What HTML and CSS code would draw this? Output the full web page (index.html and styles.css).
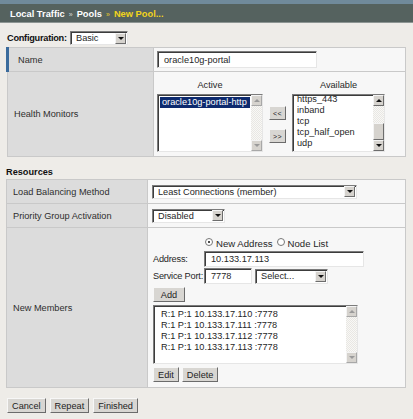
FILE: index.html
```html
<!DOCTYPE html>
<html>
<head>
<meta charset="utf-8">
<link rel="stylesheet" href="styles.css">
</head>
<body>
<div class="topbar">
  <span class="crumb">Local Traffic</span><span class="sep">»</span><span class="crumb">Pools</span><span class="sep sep-cur">»</span><span class="crumb cur">New Pool...</span>
</div>
<div class="config">
  <span class="config-label">Configuration:</span>
  <div class="sel sel-basic"><span class="sel-text">Basic</span><span class="sel-btn"><i class="tri-down"></i></span></div>
</div>

<table class="grid grid-general">
  <tr class="row-name">
    <th class="lbl lbl-mark">Name</th>
    <td class="val"><div class="inp inp-name">oracle10g-portal</div></td>
  </tr>
  <tr class="row-hm">
    <th class="lbl">Health Monitors</th>
    <td class="val">
      <div class="hm">
        <div class="hm-col">
          <div class="hm-head">Active</div>
          <div class="lb lb-active">
            <div class="lb-items">
              <div class="opt opt-sel">oracle10g-portal-http</div>
            </div>
            <div class="sb sb-off">
              <div class="sb-btn"><i class="tri-up"></i></div>
              <div class="sb-track"></div>
              <div class="sb-btn"><i class="tri-down"></i></div>
            </div>
          </div>
        </div>
        <div class="hm-moves">
          <div class="btn btn-move">&lt;&lt;</div>
          <div class="btn btn-move">&gt;&gt;</div>
        </div>
        <div class="hm-col">
          <div class="hm-head">Available</div>
          <div class="lb lb-avail">
            <div class="lb-items lb-scrolled">
              <div class="opt">https_443</div>
              <div class="opt">inband</div>
              <div class="opt">tcp</div>
              <div class="opt">tcp_half_open</div>
              <div class="opt">udp</div>
            </div>
            <div class="sb">
              <div class="sb-btn"><i class="tri-up"></i></div>
              <div class="sb-track"><div class="sb-thumb"></div></div>
              <div class="sb-btn"><i class="tri-down"></i></div>
            </div>
          </div>
        </div>
      </div>
    </td>
  </tr>
</table>

<div class="section-title">Resources</div>

<table class="grid grid-res">
  <tr class="row-lb">
    <th class="lbl">Load Balancing Method</th>
    <td class="val"><div class="sel sel-lb"><span class="sel-text">Least Connections (member)</span><span class="sel-btn"><i class="tri-down"></i></span></div></td>
  </tr>
  <tr class="row-pg">
    <th class="lbl">Priority Group Activation</th>
    <td class="val"><div class="sel sel-pg"><span class="sel-text">Disabled</span><span class="sel-btn"><i class="tri-down"></i></span></div></td>
  </tr>
  <tr class="row-members">
    <th class="lbl">New Members</th>
    <td class="val">
      <div class="members">
        <div class="radios">
          <span class="radio radio-on"></span><span class="radio-label">New Address</span>
          <span class="radio"></span><span class="radio-label">Node List</span>
        </div>
        <div class="field-row">
          <span class="field-label">Address:</span>
          <div class="inp inp-addr">10.133.17.113</div>
        </div>
        <div class="field-row">
          <span class="field-label">Service Port:</span>
          <div class="inp inp-port">7778</div>
          <div class="sel sel-port"><span class="sel-text">Select...</span><span class="sel-btn"><i class="tri-down"></i></span></div>
        </div>
        <div class="btn btn-add">Add</div>
        <div class="lb lb-members">
          <div class="lb-items">
            <div class="opt">R:1 P:1 10.133.17.110 :7778</div>
            <div class="opt">R:1 P:1 10.133.17.111 :7778</div>
            <div class="opt">R:1 P:1 10.133.17.112 :7778</div>
            <div class="opt">R:1 P:1 10.133.17.113 :7778</div>
          </div>
          <div class="sb sb-off">
            <div class="sb-btn"><i class="tri-up"></i></div>
            <div class="sb-track"></div>
            <div class="sb-btn"><i class="tri-down"></i></div>
          </div>
        </div>
        <div class="btn-row">
          <div class="btn">Edit</div>
          <div class="btn">Delete</div>
        </div>
      </div>
    </td>
  </tr>
</table>

<div class="actions">
  <div class="btn">Cancel</div>
  <div class="btn">Repeat</div>
  <div class="btn">Finished</div>
</div>
</body>
</html>
```

FILE: styles.css
```css
* { box-sizing: border-box; }

html, body {
  margin: 0;
  padding: 0;
}

body {
  width: 413px;
  height: 419px;
  overflow: hidden;
  background: #eeece8;
  font-family: "Liberation Sans", Arial, sans-serif;
  font-size: 9.2px;
  color: #262626;
}

/* ---------- top bar ---------- */
.topbar {
  height: 23px;
  padding: 4px 0 0 10px;
  display: flex;
  align-items: center;
  background: linear-gradient(#708a9b 0, #708a9b 4px, #55625f 4px, #55625f 22px, #8d9593 22px);
  color: #ffffff;
  font-weight: bold;
  font-size: 9.3px;
}

.sep {
  font-size: 7px;
  margin: 2px 4px 0 4px;
  color: #d8dcdc;
  font-weight: normal;
}

.sep-cur { color: #e8cc2a; }
.cur { color: #f2d41c; }

/* ---------- configuration ---------- */
.config {
  height: 24px;
  padding: 6px 0 0 7px;
  display: flex;
  align-items: center;
}

.config-label {
  font-weight: bold;
  width: 63px;
  letter-spacing: -0.25px;
  color: #111;
  white-space: nowrap;
}

/* ---------- select / input ---------- */
.sel {
  height: 14px;
  display: flex;
  align-items: center;
  background: #fff;
  border: 1px solid;
  border-color: #7b7b7b #e6e6e6 #e6e6e6 #7b7b7b;
  box-shadow: inset 1px 1px 0 #3c3c3c;
  padding: 0 1px 0 5px;
  flex-shrink: 0;
}

.sel-text {
  flex: 1;
  white-space: nowrap;
  overflow: hidden;
}

.sel-btn {
  width: 11px;
  height: 11px;
  background: #d6d3ce;
  border: 1px solid;
  border-color: #f4f4f4 #6d6d6d #6d6d6d #f4f4f4;
  display: flex;
  align-items: center;
  justify-content: center;
}

.tri-down, .tri-up {
  display: block;
  width: 0;
  height: 0;
  border-left: 3px solid transparent;
  border-right: 3px solid transparent;
}

.tri-down { border-top: 3px solid #111; }
.tri-up { border-bottom: 3px solid #111; }

.sel-basic { width: 58px; }
.sel-lb { width: 205px; }
.sel-pg { width: 73px; }
.sel-port { width: 73px; height: 15px; }

.inp {
  height: 16px;
  display: flex;
  align-items: center;
  padding: 0 6px;
  background: #fff;
  border: 1px solid;
  border-color: #7b7b7b #e6e6e6 #e6e6e6 #7b7b7b;
  box-shadow: inset 1px 1px 0 #3c3c3c;
  white-space: nowrap;
  flex-shrink: 0;
}

.inp-name { width: 160px; height: 17px; }
.inp-addr { width: 160px; }
.inp-port { width: 48px; }

/* ---------- grid tables ---------- */
.grid {
  margin-left: 6px;
  width: 400px;
  border-collapse: collapse;
  border: 1px solid #c3c3c3;
}

.grid th, .grid td {
  border: 1px solid #c9c9c9;
  padding: 0;
}

.lbl {
  background: #dcdcdc;
  font-weight: normal;
  text-align: left;
  padding-left: 6px !important;
  color: #2e2e2e;
}

.lbl-mark {
  border-left: 3px solid #3b6b9c !important;
  padding-left: 9px !important;
}

.val {
  background: #f7f7f7;
}

.grid-general .lbl { width: 146px; }
.grid-general .val { padding-left: 3px; }
.row-name td, .row-name th { height: 24px; }
.row-hm td, .row-hm th { height: 85px; }

/* health monitors */
.hm {
  display: flex;
  align-items: flex-start;
  padding-top: 4px;
}

.hm-col {
  display: flex;
  flex-direction: column;
  align-items: stretch;
}

.hm-head {
  text-align: center;
  height: 14px;
  line-height: 10px;
}

.hm-moves {
  display: flex;
  flex-direction: column;
  gap: 9px;
  padding: 26px 6px 0 6px;
}

.btn {
  display: flex;
  align-items: center;
  justify-content: center;
  height: 15px;
  padding: 0 4px;
  background: #d8d6d2;
  border: 1px solid;
  border-color: #f7f7f7 #6b6b6b #6b6b6b #f7f7f7;
  color: #222;
  white-space: nowrap;
}

.btn-move {
  width: 17px;
  height: 14px;
  padding: 0;
  font-size: 7px;
  letter-spacing: 0.5px;
}

.lb {
  display: flex;
  background: #fff;
  border: 1px solid;
  border-color: #7b7b7b #e6e6e6 #e6e6e6 #7b7b7b;
  box-shadow: inset 1px 1px 0 #3c3c3c;
  overflow: hidden;
}

.lb-items {
  flex: 1;
  padding: 2px 1px 0 2px;
  overflow: hidden;
}

.lb-scrolled { padding-top: 0; margin-top: -1px; }

.opt {
  height: 11px;
  line-height: 11px;
  padding-left: 2px;
  white-space: nowrap;
}

.opt-sel {
  background: #0d2a6e;
  color: #fff;
}

.lb-active { width: 106px; height: 58px; }
.lb-avail { width: 93px; height: 58px; }
.lb-members { width: 205px; height: 59px; margin-top: 3px; }
.lb-members .opt { padding-left: 5px; }
.lb-members .lb-items { padding-top: 3px; }

.sb {
  width: 11px;
  display: flex;
  flex-direction: column;
}

.sb-btn {
  height: 11px;
  background: #d6d3ce;
  border: 1px solid;
  border-color: #f4f4f4 #6d6d6d #6d6d6d #f4f4f4;
  display: flex;
  align-items: center;
  justify-content: center;
}

.sb-off .tri-down { border-top-color: #9a9a9a; }
.sb-off .tri-up { border-bottom-color: #9a9a9a; }
.sb-off .sb-btn { border-color: #f4f4f4 #a8a8a8 #a8a8a8 #f4f4f4; }

.sb-track {
  flex: 1;
  background: repeating-conic-gradient(#e9e7e3 0 25%, #f8f8f6 0 50%) 0 0 / 2px 2px;
  display: flex;
  flex-direction: column;
  padding-top: 17px;
}

.sb-thumb {
  height: 17px;
  background: #d6d3ce;
  border: 1px solid;
  border-color: #f4f4f4 #6d6d6d #6d6d6d #f4f4f4;
}

/* ---------- resources ---------- */
.section-title {
  font-weight: bold;
  color: #111;
  padding: 10px 0 0 6px;
  height: 22px;
}

.grid-res .lbl { width: 141px; }
.grid-res .val { padding-left: 4px; }
.row-lb td, .row-lb th { height: 24px; }
.row-pg td, .row-pg th { height: 24px; }
.row-members td, .row-members th { height: 160px; }

.members {
  display: flex;
  flex-direction: column;
  align-items: flex-start;
  padding: 7px 0 4px 1px;
}

.radios {
  display: flex;
  align-items: center;
  height: 14px;
  padding-left: 52px;
}

.radio {
  width: 8px;
  height: 8px;
  border-radius: 50%;
  border: 1px solid #777;
  background: #fff;
  margin-right: 3px;
  position: relative;
  margin-top: -3px;
}

.radio-on::after {
  content: "";
  position: absolute;
  left: 2px;
  top: 2px;
  width: 2px;
  height: 2px;
  border-radius: 50%;
  background: #111;
}

.radio-label {
  font-size: 9.6px;
  margin-right: 4px;
}

.field-row {
  display: flex;
  align-items: center;
  margin-top: 1px;
}

.field-label {
  width: 51px;
  flex-shrink: 0;
  white-space: nowrap;
  letter-spacing: -0.2px;
}

.inp-port { margin-right: 3px; }

.btn-add {
  margin-top: 3px;
  width: 32px;
}

.btn-row {
  display: flex;
  gap: 3px;
  margin-top: 3px;
}

/* ---------- bottom actions ---------- */
.actions {
  display: flex;
  gap: 4px;
  padding: 10px 0 0 7px;
}
```
